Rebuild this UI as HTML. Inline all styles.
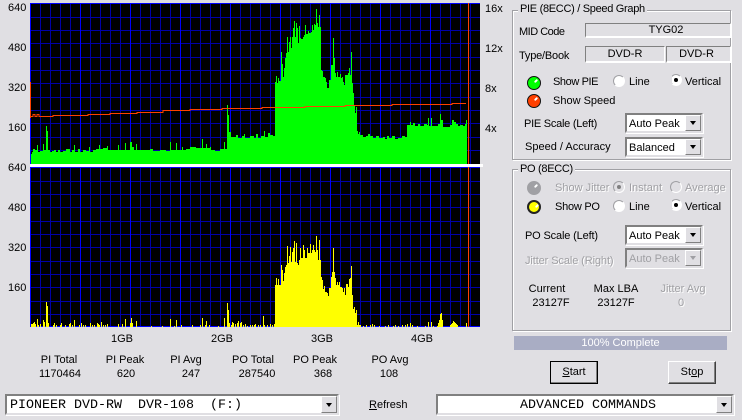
<!DOCTYPE html>
<html><head><meta charset="utf-8"><style>
html,body{margin:0;padding:0;width:742px;height:420px;overflow:hidden;background:#e0dfe3}
body{position:relative;font:11px "Liberation Sans",Arial,sans-serif;color:#000}
.t{position:absolute;white-space:nowrap;line-height:13px;height:13px}
.c{transform:translateX(-50%)}
.d{color:#a0a0a4;text-shadow:1px 1px 0 #fff}
.g{position:absolute;border:1px solid #a0a0a4;box-shadow:1px 1px 0 #fff,inset 1px 1px 0 #fff;box-sizing:border-box}
.gl{position:absolute;background:#e0dfe3;padding:0 2px;line-height:13px;white-space:nowrap}
.f{position:absolute;box-sizing:border-box;border:1px solid;border-color:#808080 #fff #fff #808080;border-bottom-width:2px;text-align:center;line-height:14px}
.cb{position:absolute;box-sizing:border-box;background:#fff;border:2px solid;border-color:#808080 #e0dfe3 #e0dfe3 #808080;box-shadow:1px 1px 0 #fff;line-height:18px;padding-left:2px;white-space:nowrap;overflow:hidden}
.cb.x{background:#e0dfe3;color:#a0a0a4}
.ar{position:absolute;right:0;top:0;bottom:0;width:16px;background:#e0dfe3;border:1px solid;border-color:#fff #808080 #808080 #fff;box-sizing:border-box}
.ar:after{content:"";position:absolute;left:4px;top:50%;margin-top:-2px;border:3.5px solid transparent;border-top:4px solid #000;border-bottom:0}
.cb.x .ar:after{border-top-color:#a0a0a4}
.r{position:absolute;width:12px;height:12px;border-radius:50%;background:#fff;box-sizing:border-box;border:1px solid;border-color:#a0a0a4 #fff #fff #a0a0a4}
.r.on{clip-path:inset(0 0 0 2px)}
.r.on:after{content:"";position:absolute;left:3px;top:3px;width:4px;height:4px;border-radius:50%;background:#000}
.r.n{background:#e0dfe3;clip-path:none}
.r.n.on:after{background:#808080}
.led{position:absolute;width:14px;height:14px;border-radius:50%;border:1px solid #111;box-sizing:border-box}
.led:after{content:"";position:absolute;left:6px;top:3px;width:4px;height:2px;background:#fff;transform:rotate(-45deg);border-radius:1px}
.b{position:absolute;box-sizing:border-box;background:#e0dfe3;border:1px solid;border-color:#fff #404040 #404040 #fff;box-shadow:inset -1px -1px 0 #808080;text-align:center;line-height:21px}
.m{font-family:"Liberation Mono","Courier New",monospace;font-size:13.33px;white-space:pre}
</style></head><body>
<svg width="742" height="420" style="position:absolute;left:0;top:0" shape-rendering="crispEdges">
<rect x="30" y="3" width="450" height="161" fill="#000"/>
<rect x="30" y="167" width="450" height="160" fill="#000"/>
<g stroke="#0000a8" fill="none">
<path d="M40.5 3V164M50.5 3V164M60.5 3V164M70.5 3V164M90.5 3V164M100.5 3V164M110.5 3V164M120.5 3V164M140.5 3V164M150.5 3V164M160.5 3V164M170.5 3V164M190.5 3V164M200.5 3V164M210.5 3V164M220.5 3V164M240.5 3V164M250.5 3V164M260.5 3V164M270.5 3V164M290.5 3V164M300.5 3V164M310.5 3V164M320.5 3V164M340.5 3V164M350.5 3V164M360.5 3V164M370.5 3V164M390.5 3V164M400.5 3V164M410.5 3V164M420.5 3V164M440.5 3V164M450.5 3V164M460.5 3V164M470.5 3V164"/>
<path d="M30 17.5H480M30 30.5H480M30 43.5H480M30 57.5H480M30 70.5H480M30 83.5H480M30 97.5H480M30 110.5H480M30 123.5H480M30 137.5H480M30 150.5H480"/>
<path d="M40.5 167V327M50.5 167V327M60.5 167V327M70.5 167V327M90.5 167V327M100.5 167V327M110.5 167V327M120.5 167V327M140.5 167V327M150.5 167V327M160.5 167V327M170.5 167V327M190.5 167V327M200.5 167V327M210.5 167V327M220.5 167V327M240.5 167V327M250.5 167V327M260.5 167V327M270.5 167V327M290.5 167V327M300.5 167V327M310.5 167V327M320.5 167V327M340.5 167V327M350.5 167V327M360.5 167V327M370.5 167V327M390.5 167V327M400.5 167V327M410.5 167V327M420.5 167V327M440.5 167V327M450.5 167V327M460.5 167V327M470.5 167V327"/>
<path d="M30 181.5H480M30 194.5H480M30 207.5H480M30 221.5H480M30 234.5H480M30 247.5H480M30 261.5H480M30 274.5H480M30 287.5H480M30 301.5H480M30 314.5H480"/>
</g>
<g stroke="#0000ff" fill="none">
<path d="M30.5 3V164M80.5 3V164M130.5 3V164M180.5 3V164M230.5 3V164M280.5 3V164M330.5 3V164M380.5 3V164M430.5 3V164M30 3.5H480"/>
<path d="M30.5 167V327M80.5 167V327M130.5 167V327M180.5 167V327M230.5 167V327M280.5 167V327M330.5 167V327M380.5 167V327M430.5 167V327M30 167.5H480M30 326.5H480"/>
</g>
<path fill="#00ff00" d="M31 164V154H32V152H33V149H35V150H37V145H38V152H40V151H43V144H44V150H46V126H47V131H48V150H50V152H52V151H54V150H56V152H58V150H60V152H63V151H66V149H70V152H72V150H74V145H75V152H78V149H80V152H83V150H86V151H89V147H90V152H93V150H96V149H99V145H100V149H103V148H107V146H108V150H118V145H119V150H125V143H126V150H130V142H132V147H134V150H136V144H137V150H150V149H153V151H160V150H166V151H170V142H171V150H176V143H177V150H182V147H183V150H186V149H190V147H196V148H202V139H203V148H206V144H207V148H210V147H211V150H215V151H220V149H224V142H225V149H227V105H228V115H229V132H231V137H236V135H238V138H242V136H244V134H245V138H250V136H254V138H256V134H258V138H261V136H264V131H265V137H268V133H270V135H273V136H275V82H276V76H277V83H278V78H279V81H281V52H282V64H283V77H284V68H285V58H286V53H287V37H288V52H289V42H290V37H291V48H292V37H293V28H294V21H295V37H296V23H297V28H298V43H299V26H300V38H301V39H303V37H304V35H305V25H306V34H308V31H309V33H311V32H312V25H313V30H314V24H315V25H316V9H317V23H318V27H319V15H320V27H321V70H322V71H323V77H325V78H326V82H327V88H329V80H331V65H333V38H334V58H335V73H336V77H337V72H338V77H340V74H341V78H342V77H343V82H344V85H345V75H348V73H349V68H350V75H351V52H352V83H353V93H354V105H355V113H356V107H357V131H358V134H359V132H360V135H363V137H366V136H368V134H370V136H373V138H376V136H379V138H383V137H385V139H387V136H389V138H392V136H395V139H398V138H402V136H405V137H407V125H410V122H411V125H413V123H415V126H418V124H420V126H424V124H427V125H428V118H429V126H431V118H432V126H438V124H440V114H441V120H443V127H450V125H452V120H454V122H456V124H458V126H460V125H463V126H465V124H466V120H467V164Z"/>
<path fill="#ffff00" d="M275 327V285H276V278H277V285H278V279H279V285H281V265H282V270H283V281H284V273H285V267H286V265H287V246H288V263H289V256H290V247H291V262H292V252H293V248H294V241H295V262H296V243H297V263H298V265H299V260H300V248H301V258H303V245H304V250H305V258H307V248H308V253H310V244H311V253H312V250H313V245H314V250H315V252H316V236H317V250H318V260H319V240H320V260H321V277H322V280H323V289H324V286H325V292H327V293H328V296H329V288H331V277H332V272H333V248H334V272H335V278H336V285H337V282H338V285H339V282H340V287H342V288H343V292H344V288H345V295H346V284H348V287H349V279H350V278H351V266H352V295H353V309H354V307H355V313H356V310H357V325H358V322H359V325H360V327Z"/>
<path stroke="#ffff00" fill="none" d="M31.5 327V324M32.5 327V324M33.5 327V323M34.5 327V322M35.5 327V324M37.5 327V319M38.5 327V325M40.5 327V324M43.5 327V320M44.5 327V322M46.5 327V302M47.5 327V306M48.5 327V323M53.5 327V325M54.5 327V323M56.5 327V325M60.5 327V325M61.5 327V323M65.5 327V325M69.5 327V324M70.5 327V323M72.5 327V325M74.5 327V320M79.5 327V325M81.5 327V323M83.5 327V325M85.5 327V325M90.5 327V323M92.5 327V325M94.5 327V325M97.5 327V323M98.5 327V324M99.5 327V325M101.5 327V322M103.5 327V325M105.5 327V325M107.5 327V324M118.5 327V324M122.5 327V324M125.5 327V319M130.5 327V323M131.5 327V318M132.5 327V323M136.5 327V321M151.5 327V326M162.5 327V326M170.5 327V319M174.5 327V326M176.5 327V320M181.5 327V325M192.5 327V325M200.5 327V325M202.5 327V318M205.5 327V325M206.5 327V321M209.5 327V325M218.5 327V326M224.5 327V318M227.5 327V303M228.5 327V310M229.5 327V323M231.5 327V325M232.5 327V322M233.5 327V323M235.5 327V324M237.5 327V323M238.5 327V321M240.5 327V323M241.5 327V322M243.5 327V325M245.5 327V324M247.5 327V326M250.5 327V325M252.5 327V325M254.5 327V325M255.5 327V324M258.5 327V325M260.5 327V325M263.5 327V316M264.5 327V325M267.5 327V325M270.5 327V324M272.5 327V325M274.5 327V324M360.5 327V325M363.5 327V326M366.5 327V325M370.5 327V325M372.5 327V324M374.5 327V325M379.5 327V326M385.5 327V326M388.5 327V325M393.5 327V326M395.5 327V325M398.5 327V326M402.5 327V325M405.5 327V325M407.5 327V324M410.5 327V323M412.5 327V325M417.5 327V326M425.5 327V326M428.5 327V322M431.5 327V322M433.5 327V326M437.5 327V326M438.5 327V323M439.5 327V320M440.5 327V314M441.5 327V313M442.5 327V320M450.5 327V325M451.5 327V324M452.5 327V323M453.5 327V321M454.5 327V322M455.5 327V323M456.5 327V324M457.5 327V325M466.5 327V323"/>
<path fill="none" stroke="#ff4000" d="M30.5 82V118"/>
<path fill="none" stroke="#ff4000" d="M31 116.5H33V114.5H35V116.5H37V114.5H39V116.5H53V115.5H88V114.5H110V113.5H137V112.5H163V110.5H190V109.5H222V108.5H262V107.5H305V106.5H345V105.5H392V104.5H452V103.5H466"/>
<rect x="468" y="3" width="1" height="161" fill="#ff4000"/>
<rect x="468" y="167" width="1" height="160" fill="#ff4000"/>
<rect x="30" y="164" width="453" height="3" fill="#fff"/>
</svg>

<span class="t" style="left:8px;top:2px">640</span><span class="t" style="left:8px;top:42px">480</span><span class="t" style="left:8px;top:82px">320</span><span class="t" style="left:8px;top:122px">160</span>
<span class="t" style="left:8px;top:162px">640</span><span class="t" style="left:8px;top:202px">480</span><span class="t" style="left:8px;top:242px">320</span><span class="t" style="left:8px;top:282px">160</span>
<span class="t" style="left:485px;top:3px">16x</span><span class="t" style="left:485px;top:43px">12x</span><span class="t" style="left:485px;top:83px">8x</span><span class="t" style="left:485px;top:123px">4x</span>
<span class="t c" style="left:122px;top:333px">1GB</span><span class="t c" style="left:222px;top:333px">2GB</span><span class="t c" style="left:322px;top:333px">3GB</span><span class="t c" style="left:422px;top:333px">4GB</span>
<span class="t c" style="left:59px;top:354px">PI Total</span><span class="t c" style="left:60px;top:368px">1170464</span>
<span class="t c" style="left:125px;top:354px">PI Peak</span><span class="t c" style="left:126px;top:368px">620</span>
<span class="t c" style="left:186px;top:354px">PI Avg</span><span class="t c" style="left:191px;top:368px">247</span>
<span class="t c" style="left:253px;top:354px">PO Total</span><span class="t c" style="left:257px;top:368px">287540</span>
<span class="t c" style="left:315px;top:354px">PO Peak</span><span class="t c" style="left:323px;top:368px">368</span>
<span class="t c" style="left:390px;top:354px">PO Avg</span><span class="t c" style="left:389px;top:368px">108</span>

<div class="g" style="left:512px;top:10px;width:219px;height:150px"></div>
<span class="gl" style="left:518px;top:3px;letter-spacing:-.3px">PIE (8ECC) / Speed Graph</span>
<span class="t" style="left:519px;top:26px;letter-spacing:-.5px">MID Code</span>
<div class="f" style="left:585px;top:23px;width:146px;height:15px;padding-left:16px;line-height:13px">TYG02</div>
<span class="t" style="left:519px;top:50px;letter-spacing:-.2px">Type/Book</span>
<div class="f" style="left:585px;top:46px;width:80px;height:17px">DVD-R</div>
<div class="f" style="left:666px;top:46px;width:65px;height:17px;padding-right:4px">DVD-R</div>
<div class="led" style="left:527px;top:76px;background:#00ff00"></div>
<span class="t" style="left:553px;top:76px;letter-spacing:-.4px">Show PIE</span>
<div class="r" style="left:613px;top:75px"></div><span class="t" style="left:629px;top:76px">Line</span>
<div class="r on" style="left:670px;top:74px"></div><span class="t" style="left:685px;top:76px">Vertical</span>
<div class="led" style="left:527px;top:94px;background:#ff4000"></div>
<span class="t" style="left:553px;top:95px">Show Speed</span>
<span class="t" style="left:524px;top:118px;letter-spacing:-.25px">PIE Scale (Left)</span>
<div class="cb" style="left:625px;top:113px;width:78px;height:20px">Auto Peak<i class="ar"></i></div>
<span class="t" style="left:525px;top:141px">Speed / Accuracy</span>
<div class="cb" style="left:625px;top:137px;width:78px;height:20px">Balanced<i class="ar"></i></div>

<div class="g" style="left:512px;top:169px;width:219px;height:162px"></div>
<span class="gl" style="left:518px;top:163px;letter-spacing:-.3px">PO (8ECC)</span>
<div class="led" style="left:527px;top:181px;background:#a0a0a4;border-color:#a0a0a4"></div>
<span class="t d" style="left:555px;top:182px">Show Jitter</span>
<div class="r n on" style="left:613px;top:181px"></div><span class="t d" style="left:629px;top:182px">Instant</span>
<div class="r n" style="left:670px;top:181px"></div><span class="t d" style="left:685px;top:182px">Average</span>
<div class="led" style="left:527px;top:200px;background:#ffff00;border:2px solid #222"></div>
<span class="t" style="left:555px;top:201px;letter-spacing:-.25px">Show PO</span>
<div class="r" style="left:613px;top:200px"></div><span class="t" style="left:629px;top:201px">Line</span>
<div class="r on" style="left:670px;top:199px"></div><span class="t" style="left:685px;top:201px">Vertical</span>
<span class="t" style="left:525px;top:230px;letter-spacing:-.15px">PO Scale (Left)</span>
<div class="cb" style="left:625px;top:225px;width:78px;height:20px">Auto Peak<i class="ar"></i></div>
<span class="t d" style="left:525px;top:255px;letter-spacing:-.1px">Jitter Scale (Right)</span>
<div class="cb x" style="left:625px;top:248px;width:78px;height:20px">Auto Peak<i class="ar"></i></div>
<span class="t c" style="left:547px;top:283px">Current</span><span class="t c" style="left:551px;top:297px">23127F</span>
<span class="t c" style="left:616px;top:283px">Max LBA</span><span class="t c" style="left:616px;top:297px">23127F</span>
<span class="t c d" style="left:683px;top:283px">Jitter Avg</span><span class="t c d" style="left:681px;top:297px">0</span>

<div style="position:absolute;left:514px;top:336px;width:213px;height:14px;background:#a9adc4;color:#fff;text-align:center;line-height:14px">100% Complete</div>
<div class="b" style="left:550px;top:361px;width:48px;height:23px;outline:1px solid #000;outline-offset:-1px"><u>S</u>tart</div>
<div class="b" style="left:668px;top:361px;width:48px;height:23px">St<u>o</u>p</div>
<div class="cb m" style="left:5px;top:394px;width:334px;height:21px;line-height:19px;padding-left:3px">PIONEER DVD-RW  DVR-108  (F:)<i class="ar"></i></div>
<span class="t" style="left:369px;top:399px"><u>R</u>efresh</span>
<div class="cb m" style="left:436px;top:394px;width:298px;height:21px;line-height:19px;padding-left:82px">ADVANCED COMMANDS<i class="ar"></i></div>
</body></html>
